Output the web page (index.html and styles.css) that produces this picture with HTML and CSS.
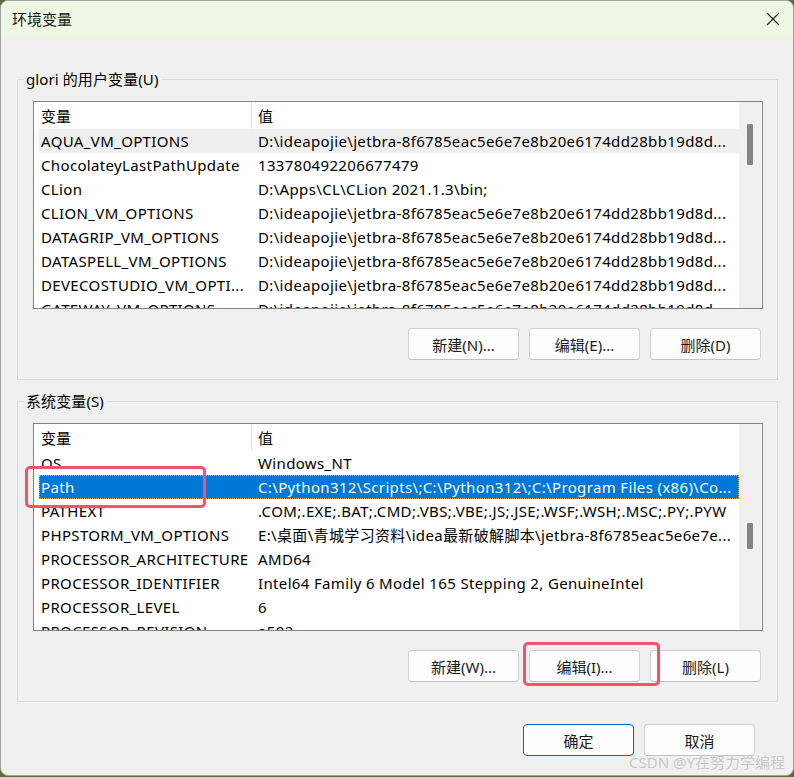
FILE: index.html
```html
<!DOCTYPE html>
<html lang="zh-CN">
<head>
<meta charset="utf-8">
<title>环境变量</title>
<link rel="stylesheet" href="styles.css">
</head>
<body>
<div class="window">
  <div class="titlebar">
    <span class="title">环境变量</span>
    <svg class="close" width="14" height="14" viewBox="0 0 14 14"><path d="M1 1 L13 13 M13 1 L1 13" stroke="#1b1b1b" stroke-width="1.1" fill="none"/></svg>
  </div>
  <div class="content">
    <fieldset class="group">
      <legend>glori 的用户变量(U)</legend>
      <div class="group-body">
        <div class="list">
          <div class="list-main">
            <div class="header"><div class="hcol hname">变量</div><div class="hcol hvalue">值</div></div>
            <div class="row hover"><div class="cell name">AQUA_VM_OPTIONS</div><div class="cell value">D:\ideapojie\jetbra-8f6785eac5e6e7e8b20e6174dd28bb19d8d...</div></div>
            <div class="row"><div class="cell name">ChocolateyLastPathUpdate</div><div class="cell value">133780492206677479</div></div>
            <div class="row"><div class="cell name">CLion</div><div class="cell value">D:\Apps\CL\CLion 2021.1.3\bin;</div></div>
            <div class="row"><div class="cell name">CLION_VM_OPTIONS</div><div class="cell value">D:\ideapojie\jetbra-8f6785eac5e6e7e8b20e6174dd28bb19d8d...</div></div>
            <div class="row"><div class="cell name">DATAGRIP_VM_OPTIONS</div><div class="cell value">D:\ideapojie\jetbra-8f6785eac5e6e7e8b20e6174dd28bb19d8d...</div></div>
            <div class="row"><div class="cell name">DATASPELL_VM_OPTIONS</div><div class="cell value">D:\ideapojie\jetbra-8f6785eac5e6e7e8b20e6174dd28bb19d8d...</div></div>
            <div class="row"><div class="cell name">DEVECOSTUDIO_VM_OPTI...</div><div class="cell value">D:\ideapojie\jetbra-8f6785eac5e6e7e8b20e6174dd28bb19d8d...</div></div>
            <div class="row"><div class="cell name">GATEWAY_VM_OPTIONS</div><div class="cell value">D:\ideapojie\jetbra-8f6785eac5e6e7e8b20e6174dd28bb19d8d...</div></div>
          </div>
          <div class="scrollbar"><div class="thumb" style="margin-top:22px;height:41px"></div></div>
        </div>
        <div class="buttons">
          <button class="btn">新建(N)...</button>
          <button class="btn">编辑(E)...</button>
          <button class="btn">删除(D)</button>
        </div>
      </div>
    </fieldset>

    <fieldset class="group second">
      <legend>系统变量(S)</legend>
      <div class="group-body">
        <div class="list">
          <div class="list-main">
            <div class="header"><div class="hcol hname">变量</div><div class="hcol hvalue">值</div></div>
            <div class="row"><div class="cell name">OS</div><div class="cell value">Windows_NT</div></div>
            <div class="row selected"><div class="cell name">Path</div><div class="cell value">C:\Python312\Scripts\;C:\Python312\;C:\Program Files (x86)\Co...</div></div>
            <div class="row"><div class="cell name">PATHEXT</div><div class="cell value">.COM;.EXE;.BAT;.CMD;.VBS;.VBE;.JS;.JSE;.WSF;.WSH;.MSC;.PY;.PYW</div></div>
            <div class="row"><div class="cell name">PHPSTORM_VM_OPTIONS</div><div class="cell value">E:\桌面\青城学习资料\idea最新破解脚本\jetbra-8f6785eac5e6e7e...</div></div>
            <div class="row"><div class="cell name">PROCESSOR_ARCHITECTURE</div><div class="cell value">AMD64</div></div>
            <div class="row"><div class="cell name">PROCESSOR_IDENTIFIER</div><div class="cell value">Intel64 Family 6 Model 165 Stepping 2, GenuineIntel</div></div>
            <div class="row"><div class="cell name">PROCESSOR_LEVEL</div><div class="cell value">6</div></div>
            <div class="row"><div class="cell name">PROCESSOR_REVISION</div><div class="cell value">a502</div></div>
          </div>
          <div class="scrollbar"><div class="thumb" style="margin-top:99px;height:26px"></div></div>
        </div>
        <div class="buttons">
          <button class="btn">新建(W)...</button>
          <button class="btn">编辑(I)...</button>
          <button class="btn">删除(L)</button>
        </div>
      </div>
    </fieldset>

    <div class="dialog-buttons">
      <button class="btn primary">确定</button>
      <button class="btn">取消</button>
    </div>
  </div>

  <div class="mark mark-path"></div>
  <div class="mark mark-edit"></div>
  <div class="watermark">CSDN @Y在努力学编程</div>
</div>
</body>
</html>
```

FILE: styles.css
```css
html, body {
  margin: 0;
  padding: 0;
}

body {
  width: 794px;
  height: 777px;
  overflow: hidden;
  background: #5d6b3c;
  font-family: "Noto Sans", "Noto Sans CJK SC", sans-serif;
  font-size: 15px;
  color: #000;
}

.window {
  position: relative;
  box-sizing: border-box;
  width: 794px;
  height: 776px;
  border: 1px solid #a3a3a3;
  border-radius: 8px;
  background: #f0f0f0;
  overflow: hidden;
  display: flex;
  flex-direction: column;
}

.titlebar {
  height: 36px;
  flex: none;
  background: #edf7e4;
  display: flex;
  align-items: center;
  justify-content: space-between;
  padding: 0 13px 0 11px;
}

.title {
  font-size: 15px;
  color: #1a1a1a;
  line-height: 20px;
}

.close {
  display: block;
}

.content {
  padding: 32px 15px 0 16px;
  display: flex;
  flex-direction: column;
}

.group {
  margin: 0;
  padding: 0;
  min-width: 0;
  border: 1px solid #d9d9d9;
}

.group.second {
  margin-top: 11px;
}

.group legend {
  margin-left: 6px;
  padding: 0 2px;
  line-height: 20px;
  font-size: 15px;
  color: #000;
  letter-spacing: 0.1px;
}

.group-body {
  padding: 12px 14px 19px 15px;
}

.list {
  height: 208px;
  box-sizing: border-box;
  border: 1px solid #838383;
  background: #fff;
  display: flex;
  overflow: hidden;
}

.list-main {
  flex: 1;
  min-width: 0;
  overflow: hidden;
}

.header {
  height: 27px;
  display: flex;
}

.hcol {
  line-height: 29px;
  height: 27px;
  white-space: nowrap;
}

.hname {
  box-sizing: border-box;
  width: 218px;
  padding-left: 7px;
  border-right: 1px solid #e5e5e5;
}

.hvalue {
  padding-left: 6px;
}

.row {
  height: 24px;
  margin-left: 5px;
  display: flex;
  line-height: 24px;
}

.row.hover {
  background: #efefef;
}

.row.selected {
  background: #0078d7;
  color: #fff;
  outline: 1px dotted #e0a050;
  outline-offset: -1px;
}

.cell {
  white-space: nowrap;
  overflow: hidden;
  letter-spacing: 0.35px;
}

.cell.name {
  box-sizing: border-box;
  width: 213px;
  flex: none;
  padding-left: 2px;
}

.cell.value {
  flex: 1;
  min-width: 0;
  padding-left: 6px;
}

.scrollbar {
  width: 22px;
  flex: none;
  background: #f0f0f0;
  border-right: 1px solid #fafafa;
  display: flex;
  justify-content: center;
  align-items: flex-start;
}

.thumb {
  width: 6px;
  background: #858585;
  border-radius: 1px;
}

.buttons {
  margin-top: 19px;
  margin-right: 2px;
  display: flex;
  justify-content: flex-end;
  gap: 10px;
}

.btn {
  box-sizing: border-box;
  width: 111px;
  height: 32px;
  padding: 0;
  background: #fdfdfd;
  border: 1px solid #d1d1d1;
  border-bottom-color: #c2c2c2;
  border-radius: 4px;
  font-family: "Noto Sans", "Noto Sans CJK SC", sans-serif;
  font-size: 15px;
  color: #1a1a1a;
}

.btn.primary {
  border: 1px solid #0067c0;
}

.dialog-buttons {
  margin-top: 22px;
  margin-right: 23px;
  display: flex;
  justify-content: flex-end;
  gap: 10px;
}

.mark {
  position: absolute;
  box-sizing: border-box;
  border: 3px solid #f4516b;
  border-radius: 5px;
}

.mark-path {
  left: 24px;
  top: 465px;
  width: 181px;
  height: 42px;
}

.mark-edit {
  left: 522px;
  top: 641px;
  width: 137px;
  height: 44px;
}

.watermark {
  position: absolute;
  right: 8px;
  bottom: 3px;
  font-size: 15px;
  line-height: 20px;
  color: #c6c6c6;
  text-shadow: 0 0 1px #ffffff;
  white-space: nowrap;
}
```
